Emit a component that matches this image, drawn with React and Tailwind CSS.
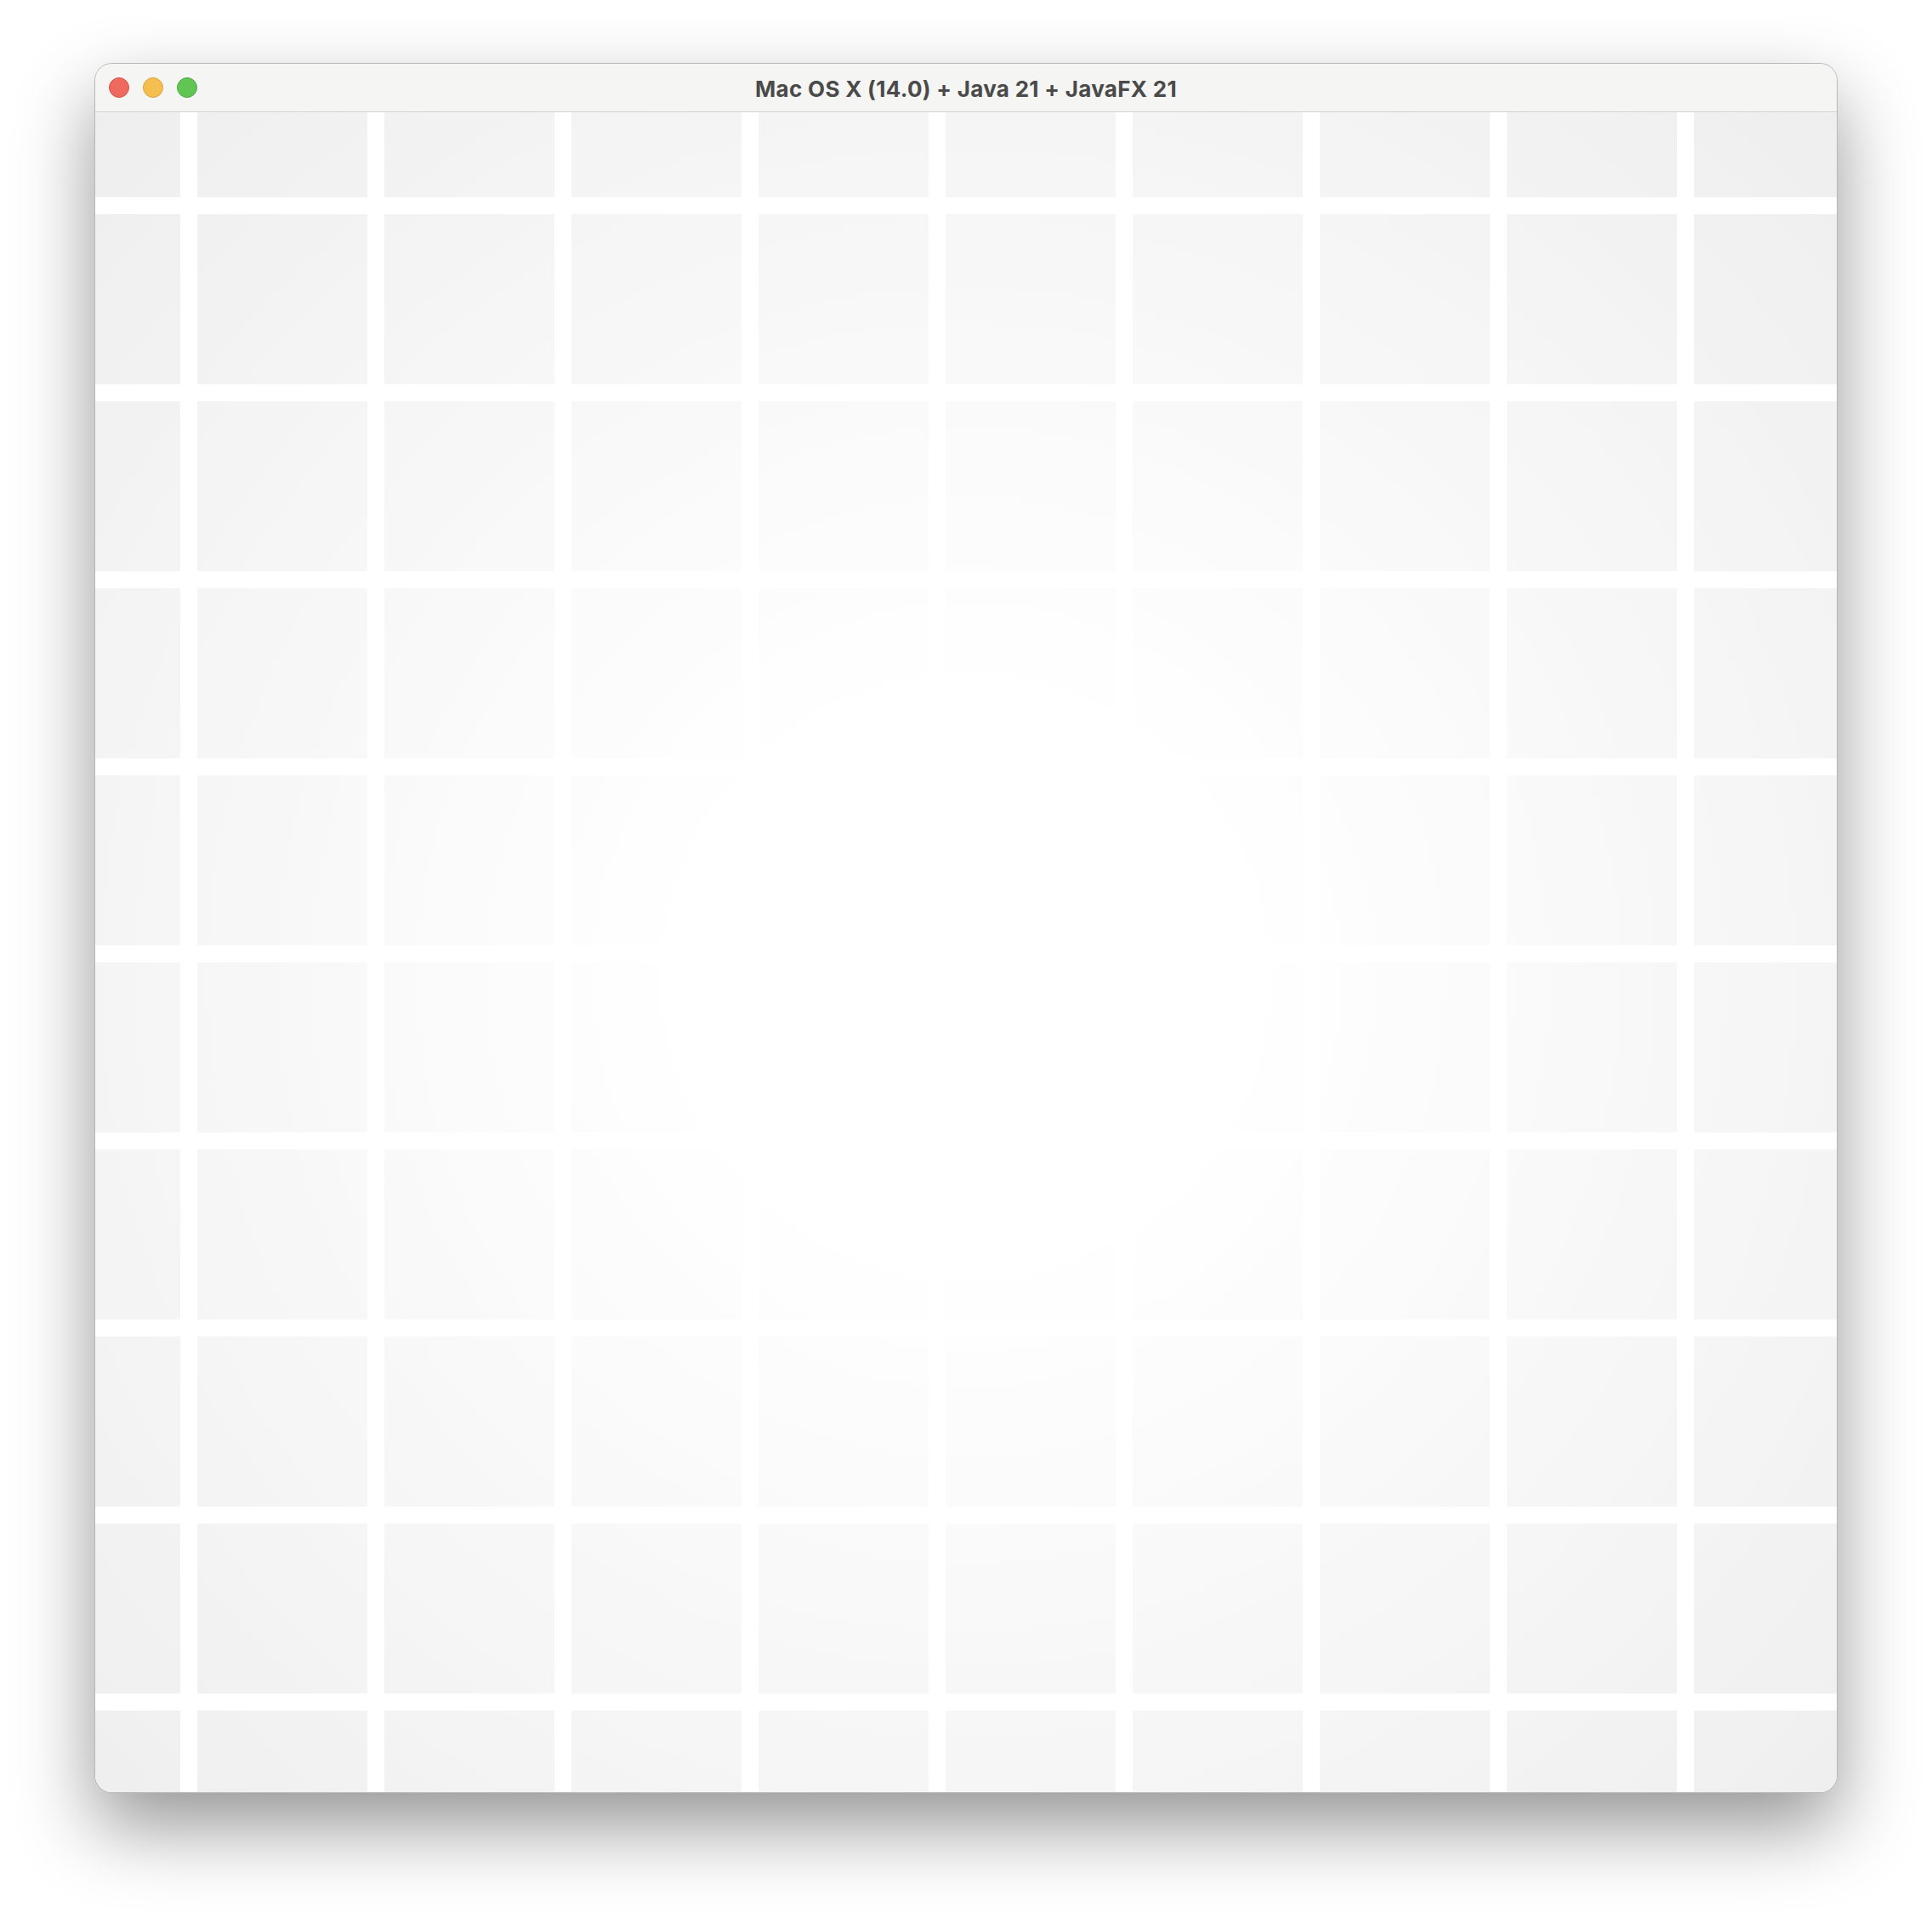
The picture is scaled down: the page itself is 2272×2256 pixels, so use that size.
import React from 'react';

// 10 x 10 cells: the outer ring is cropped by the window edges
const cols = Array.from({ length: 10 });
const rows = Array.from({ length: 10 });

const TrafficLights = () => (
  <div className="flex items-center gap-4 pl-4">
    <span className="w-6 h-6 rounded-full bg-[#ee6a5f] border border-[#d55347]" />
    <span className="w-6 h-6 rounded-full bg-[#f5bf4f] border border-[#d9a33c]" />
    <span className="w-6 h-6 rounded-full bg-[#61c554] border border-[#4ea845]" />
  </div>
);

const TitleBar = () => (
  <div className="relative h-[57px] flex items-center bg-[#f5f5f3] border-b border-[#d2d2d0] rounded-t-[20px]">
    <TrafficLights />
    <div className="absolute inset-0 flex items-center justify-center pt-[2px] pointer-events-none">
      <span className="font-['Inter',sans-serif] font-bold text-[26px] text-[#4a4a4a] tracking-[0.3px]">
        Mac OS X (14.0) + Java 21 + JavaFX 21
      </span>
    </div>
  </div>
);

const Board = () => (
  <div className="h-[1976px] bg-white overflow-hidden rounded-b-[20px]">
    <div className="grid grid-cols-[100px_repeat(8,200px)_168px] grid-rows-[100px_repeat(8,200px)_96px] gap-[20px]">
      {rows.map((_, r) =>
        cols.map((_, c) => (
          <div
            key={`${r}-${c}`}
            className="bg-fixed bg-[radial-gradient(circle_at_1136px_1150px,#ffffff_330px,#eeeeee_1450px)]"
          />
        ))
      )}
    </div>
  </div>
);

export default function App() {
  return (
    <div className="min-h-screen bg-white pt-[75px] pl-[112px]">
      <div className="w-[2048px] rounded-[20px] shadow-[0_0_0_1px_#b8b8b8,0_40px_90px_rgba(0,0,0,0.42)]">
        <TitleBar />
        <Board />
      </div>
    </div>
  );
}
